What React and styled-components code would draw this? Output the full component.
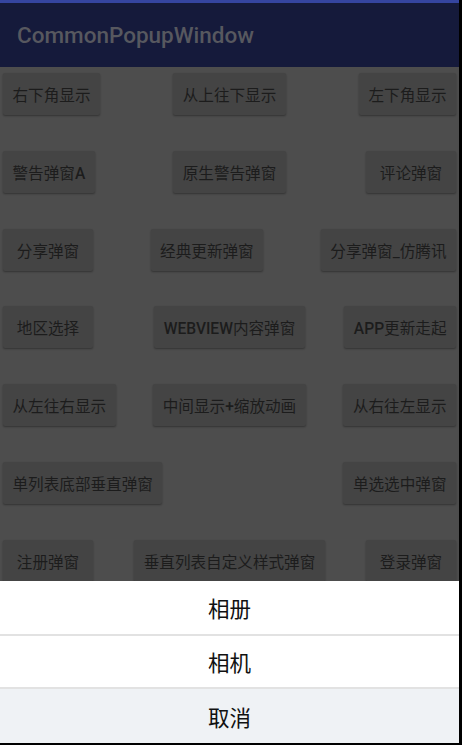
import styled, { createGlobalStyle } from "styled-components";

const rows = [
	{ items: ["右下角显示", "从上往下显示", "左下角显示"] },
	{ items: ["警告弹窗A", "原生警告弹窗", "评论弹窗"] },
	{ items: ["分享弹窗", "经典更新弹窗", "分享弹窗_仿腾讯"], between: true },
	{ items: ["地区选择", "WEBVIEW内容弹窗", "APP更新走起"] },
	{ items: ["从左往右显示", "中间显示+缩放动画", "从右往左显示"] },
	{ items: ["单列表底部垂直弹窗", null, "单选选中弹窗"] },
	{ items: ["注册弹窗", "垂直列表自定义样式弹窗", "登录弹窗"] },
];

// latin runs are drawn in Roboto Medium, the CJK stays regular
function Label({ text }) {
	return (
		<span>
			{text
				.split(/([A-Za-z+]+)/)
				.filter(Boolean)
				.map((part, i) => (/[A-Za-z+]/.test(part) ? <Latin key={i}>{part}</Latin> : part))}
		</span>
	);
}

export default function App() {
	return (
		<>
			<GlobalStyle />
			<Screen>
				<StatusBar />
				<Toolbar>
					<Title>CommonPopupWindow</Title>
				</Toolbar>
				<Content>
					{rows.map((row, i) => (
						<Row key={i} $between={row.between}>
							{row.items.map((label, j) =>
								label ? (
									<Button key={j} $pos={j}>
										<Label text={label} />
									</Button>
								) : (
									<span key={j} />
								)
							)}
						</Row>
					))}
				</Content>
				<Sheet>
					<SheetItem $divider>相册</SheetItem>
					<SheetItem $divider $h={51}>
						相机
					</SheetItem>
					<SheetItem $cancel $h={54}>
						取消
					</SheetItem>
				</Sheet>
			</Screen>
		</>
	);
}

const GlobalStyle = createGlobalStyle`
	html, body {
		margin: 0;
		padding: 0;
		background: #000000;
	}
	body {
		font-family: Roboto, "Noto Sans CJK SC", sans-serif;
	}
`;

const Screen = styled.div`
	width: 459px;
	height: 743px;
	display: flex;
	flex-direction: column;
	background-color: #4d4d4d;
	overflow: hidden;
`;

const StatusBar = styled.div`
	height: 3px;
	flex-shrink: 0;
	background-color: #3545a0;
`;

const Toolbar = styled.header`
	height: 64px;
	flex-shrink: 0;
	display: flex;
	align-items: center;
	padding-left: 17px;
	background-color: #151a3b;
`;

const Title = styled.h1`
	margin: 0;
	font-family: Roboto, sans-serif;
	font-weight: 500;
	font-size: 22.5px;
	color: #57585f;
`;

const Content = styled.main`
	flex: 1;
	min-height: 0;
	overflow: hidden;
	display: flex;
	flex-direction: column;
	gap: 35.8px;
	padding: 6px 3px 0;
`;

const Row = styled.div`
	display: ${(p) => (p.$between ? "flex" : "grid")};
	grid-template-columns: 1fr auto 1fr;
	justify-content: space-between;
	align-items: center;
	flex-shrink: 0;
`;

const Button = styled.div`
	height: 42px;
	min-width: 90px;
	box-sizing: border-box;
	padding: 0 9.5px;
	display: flex;
	align-items: center;
	justify-content: center;
	justify-self: ${(p) => ["start", "center", "end"][p.$pos]};
	background-color: #444444;
	border-radius: 2px;
	box-shadow: 0 1px 2px rgba(0, 0, 0, 0.35);
	font-family: Roboto, "Noto Sans CJK SC", sans-serif;
	font-weight: 400;
	font-size: 15.6px;
	color: #1c1c1c;
	white-space: nowrap;
`;

const Latin = styled.span`
	font-family: Roboto, sans-serif;
	font-weight: 500;
`;

const Sheet = styled.div`
	flex-shrink: 0;
	display: flex;
	flex-direction: column;
	background-color: #ffffff;
`;

const SheetItem = styled.div`
	height: ${(p) => p.$h || 53}px;
	display: flex;
	align-items: center;
	justify-content: center;
	font-family: "Noto Sans CJK SC", sans-serif;
	font-size: 21.5px;
	color: #111111;
	background-color: ${(p) => (p.$cancel ? "#eff2f5" : "#ffffff")};
	border-bottom: ${(p) => (p.$divider ? "2px solid #e2e2e2" : "none")};
`;
